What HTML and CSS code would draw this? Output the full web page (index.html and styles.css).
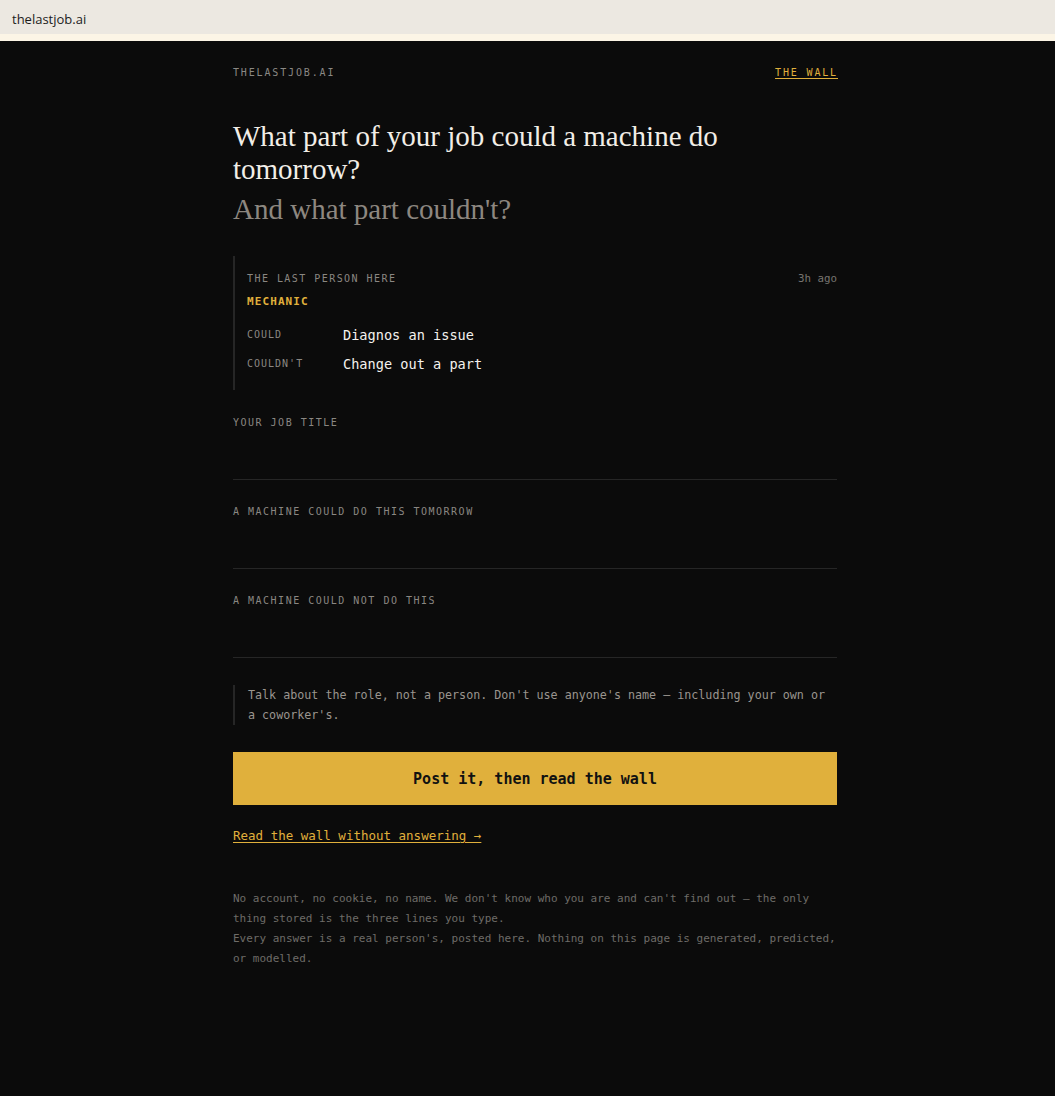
FILE: index.html
```html
<!DOCTYPE html>
<html lang="en">
<head>
<meta charset="utf-8">
<title>thelastjob.ai</title>
<link rel="stylesheet" href="styles.css">
</head>
<body>
<div class="browserbar"><span class="url">thelastjob.ai</span></div>
<div class="page">
  <main class="wrap">
    <header class="top">
      <span class="brand">THELASTJOB.AI</span>
      <a class="wall-link" href="#wall">THE WALL</a>
    </header>

    <h1 class="q">What part of your job could a machine do tomorrow?</h1>
    <p class="q-sub">And what part couldn't?</p>

    <section class="last">
      <div class="last-meta">
        <span class="eyebrow">THE LAST PERSON HERE</span>
        <span class="ago">3h ago</span>
      </div>
      <div class="last-job">MECHANIC</div>
      <div class="last-rows">
        <div class="row"><span class="row-label">COULD</span><span class="row-value">Diagnos an issue</span></div>
        <div class="row"><span class="row-label">COULDN'T</span><span class="row-value">Change out a part</span></div>
      </div>
    </section>

    <form class="form" onsubmit="return false">
      <label class="field">
        <span class="field-label">YOUR JOB TITLE</span>
        <input class="field-input" type="text">
      </label>
      <label class="field">
        <span class="field-label">A MACHINE COULD DO THIS TOMORROW</span>
        <input class="field-input" type="text">
      </label>
      <label class="field">
        <span class="field-label">A MACHINE COULD NOT DO THIS</span>
        <input class="field-input" type="text">
      </label>

      <p class="note">Talk about the role, not a person. Don't use anyone's name — including your own or a coworker's.</p>

      <button class="post" type="submit">Post it, then read the wall</button>

      <a class="skip" href="#wall">Read the wall without answering →</a>
    </form>

    <footer class="fine">
      <p>No account, no cookie, no name. We don't know who you are and can't find out — the only thing stored is the three lines you type.</p>
      <p>Every answer is a real person's, posted here. Nothing on this page is generated, predicted, or modelled.</p>
    </footer>
  </main>
</div>
</body>
</html>
```

FILE: styles.css
```css
html, body {
  margin: 0;
  padding: 0;
  background: #0b0b0b;
}

body {
  font-family: "DejaVu Sans Mono", "Liberation Mono", monospace;
  color: #e8e6e1;
}

.browserbar {
  box-sizing: content-box;
  height: 31px;
  padding: 3px 0 0 12px;
  background: #ece8e1;
  border-bottom: 7px solid #fcf5e6;
  display: flex;
  align-items: center;
}

.url {
  font-family: "Open Sans", "Noto Sans", sans-serif;
  font-size: 13px;
  color: #1c1c1c;
}

.page {
  padding-left: 15px;
}

.wrap {
  width: 604px;
  margin: 0 auto;
  padding-top: 25px;
  padding-bottom: 120px;
}

.top {
  display: flex;
  justify-content: space-between;
  align-items: center;
  font-size: 10px;
  line-height: 14px;
  letter-spacing: 1.85px;
}

.brand {
  color: #8a8884;
}

.wall-link {
  color: #e0b03c;
  text-decoration: underline;
  text-underline-offset: 2px;
  margin-right: -1px;
}

.q {
  margin: 40px 0 0;
  font-family: "Liberation Serif", "Times New Roman", serif;
  font-weight: normal;
  font-size: 29px;
  line-height: 33px;
  color: #f2eee7;
}

.q-sub {
  margin: 7px 0 0;
  font-family: "Liberation Serif", "Times New Roman", serif;
  font-size: 29px;
  line-height: 33px;
  color: #8d8780;
}

.last {
  margin-top: 30px;
  border-left: 2px solid #262626;
  padding: 16px 0 16px 12px;
}

.last-meta {
  display: flex;
  justify-content: space-between;
  align-items: center;
  line-height: 14px;
}

.eyebrow {
  font-size: 10px;
  letter-spacing: 1.45px;
  color: #8a8782;
}

.ago {
  font-size: 10.8px;
  color: #77746f;
}

.last-job {
  margin-top: 9px;
  font-size: 11px;
  line-height: 14px;
  font-weight: bold;
  letter-spacing: 1.1px;
  color: #e0b03c;
}

.last-rows {
  margin-top: 16px;
  display: flex;
  flex-direction: column;
  gap: 9px;
}

.row {
  display: grid;
  grid-template-columns: 96px 1fr;
  align-items: center;
  line-height: 20px;
}

.row-label {
  font-size: 10px;
  letter-spacing: 1px;
  color: #8a8782;
}

.row-value {
  font-size: 13.6px;
  color: #f4f2ee;
}

.form {
  margin-top: 25px;
  display: flex;
  flex-direction: column;
}

.field {
  display: block;
}

.field + .field {
  margin-top: 24px;
}

.field-label {
  display: block;
  padding-top: 1px;
  font-size: 10px;
  line-height: 14px;
  letter-spacing: 1.5px;
  color: #8a8782;
}

.field-input {
  display: block;
  box-sizing: border-box;
  width: 100%;
  height: 50px;
  margin: 0;
  padding: 0;
  background: transparent;
  border: none;
  border-bottom: 1px solid #262626;
  color: #f4f2ee;
  font-family: inherit;
  font-size: 14px;
  outline: none;
}

.note {
  margin: 27px 0 0;
  border-left: 2px solid #262626;
  padding-left: 13px;
  font-size: 11.7px;
  line-height: 20px;
  color: #9a958f;
}

.post {
  margin-top: 27px;
  height: 53px;
  width: 100%;
  border: none;
  background: #e0b03c;
  color: #111;
  font-family: inherit;
  font-size: 15px;
  font-weight: bold;
  cursor: pointer;
}

.skip {
  margin-top: 22px;
  align-self: flex-start;
  font-size: 12.5px;
  line-height: 18px;
  color: #e0b03c;
  text-decoration: underline;
  text-underline-offset: 2px;
}

.fine {
  margin-top: 44px;
  font-size: 11px;
  line-height: 20px;
  color: #6e6c68;
}

.fine p {
  margin: 0;
}
```
